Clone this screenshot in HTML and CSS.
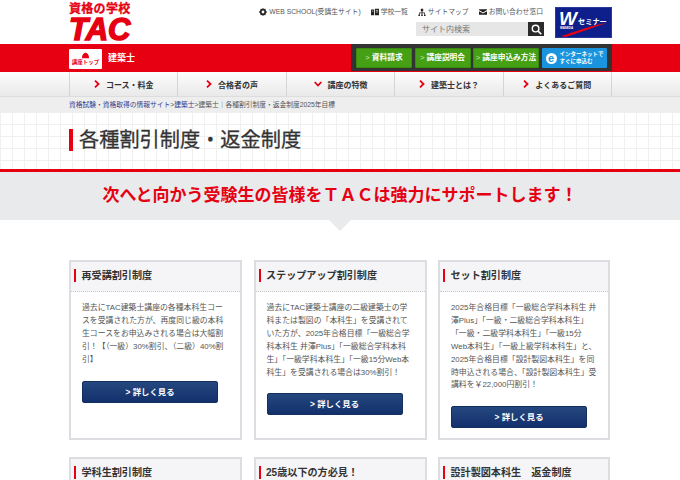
FILE: index.html
```html
<!DOCTYPE html>
<html lang="ja">
<head>
  <meta charset="utf-8">
  <title>各種割引制度・返金制度</title>
  <link rel="stylesheet" href="styles.css">
</head>
<body>

<header class="head wrap">
  <a class="logo">
    <span class="logo-sub">資格の学校</span>
    <span class="logo-tac">TAC</span>
  </a>
  <div class="head-mid">
    <ul class="head-links">
      <li>
        <svg class="ico" viewBox="0 0 10 10"><path d="M5 0l1.200 1.300 1.800-.3.3 1.800L10 5 8.300 7.200 8 9l-1.800-.3L5 10 3.800 8.700 2 9l-.3-1.800L0 5l1.700-2.200L2 1l1.800.3z" fill="#222"/><circle cx="5" cy="5" r="1.800" fill="#fff"/></svg>
        WEB SCHOOL(受講生サイト)
      </li>
      <li>
        <svg class="ico" viewBox="0 0 10 10"><path d="M0 2h4v7H0zM5 1h5v8H5z" fill="#222"/><path d="M1 4h2M6 3h3M6 5h3" stroke="#fff" stroke-width=".8"/></svg>
        学校一覧
      </li>
      <li>
        <svg class="ico" viewBox="0 0 10 10"><path d="M3.500 1h3v3h-3zM4.500 4h1v1.500h3V8h-1V6.500h-2V8h-1V6.500h-2V8h-1V5.500h3z" fill="#222"/><path d="M.5 8h2v2h-2zM4 8h2v2H4zM7.500 8h2v2h-2z" fill="#222"/></svg>
        サイトマップ
      </li>
      <li>
        <svg class="ico" viewBox="0 0 10 10"><path d="M0 1.500h10v1L5 5.500 0 2.500zM0 4l5 3 5-3v4.500H0z" fill="#222"/></svg>
        お問い合わせ窓口
      </li>
    </ul>
    <form class="search">
      <input class="search-box" type="text" placeholder="サイト内検索">
      <button class="search-btn" type="button">
        <svg viewBox="0 0 12 12" width="11" height="11"><circle cx="5" cy="5" r="3.600" fill="none" stroke="#fff" stroke-width="1.600"/><path d="M7.800 7.800l3.400 3.400" stroke="#fff" stroke-width="1.800"/></svg>
      </button>
    </form>
  </div>
  <a class="wseminar">
    <svg class="w-swoosh" viewBox="0 0 57 31"><path d="M6 29C20 25 36 18 52 16 38 20 22 27 10 30z" fill="#e60012"/></svg>
    <span class="w-letter">W</span>
    <span class="w-text">セミナー</span>
    <span class="w-small">WASEDA</span>
  </a>
</header>

<div class="redbar">
  <div class="wrap redbar-in">
    <div class="course">
      <a class="course-top">
        <svg viewBox="0 0 10 8" width="9" height="7"><path d="M3.500 1.500C3.500.5 6.500.5 6.500 1.500 8 2.500 9 4 9 7H1c0-3 1-4.500 2.500-5.500z" fill="#e60012"/></svg>
        <span>講座トップ</span>
      </a>
      <b class="course-name">建築士</b>
    </div>
    <div class="cta">
      <a class="cta-btn cta-w1"><i>&gt;</i>資料請求</a>
      <a class="cta-btn cta-w1"><i>&gt;</i>講座説明会</a>
      <a class="cta-btn cta-w2"><i>&gt;</i>講座申込み方法</a>
      <a class="cta-net">
        <span class="cta-e">e</span>
        <span class="cta-net-txt">インターネットで<br>すぐに申込む</span>
      </a>
    </div>
  </div>
</div>

<nav class="gnav">
  <ul class="wrap gnav-in">
    <li><svg class="chev" viewBox="0 0 6 8"><path d="M1 .7L4.500 4 1 7.300" /></svg>コース・料金</li>
    <li><svg class="chev" viewBox="0 0 6 8"><path d="M1 .7L4.500 4 1 7.300" /></svg>合格者の声</li>
    <li><svg class="chev chev-down" viewBox="0 0 8 6"><path d="M.7 1L4 4.500 7.300 1" /></svg>講座の特徴</li>
    <li><svg class="chev" viewBox="0 0 6 8"><path d="M1 .7L4.500 4 1 7.300" /></svg>建築士とは？</li>
    <li><svg class="chev" viewBox="0 0 6 8"><path d="M1 .7L4.500 4 1 7.300" /></svg>よくあるご質問</li>
  </ul>
</nav>

<div class="crumb">
  <p class="wrap"><a>資格試験・資格取得の情報サイト</a>&gt;<a>建築士</a>&gt;建築士｜各種割引制度・返金制度2025年目標</p>
</div>

<div class="title-area">
  <h1 class="wrap"><span class="title-text">各種割引制度・返金制度</span></h1>
</div>

<div class="lead">
  <p>次へと向かう受験生の皆様をＴＡＣは強力にサポートします！</p>
</div>

<main class="wrap cards">
  <section class="card">
    <h2><span>再受講割引制度</span></h2>
    <div class="card-body">
      <p>過去にTAC建築士講座の各種本科生コースを受講された方が、再度同じ級の本科生コースをお申込みされる場合は大幅割引！【（一級）30%割引、（二級）40%割引】</p>
      <a class="more">&gt; 詳しく見る</a>
    </div>
  </section>
  <section class="card">
    <h2><span>ステップアップ割引制度</span></h2>
    <div class="card-body">
      <p>過去にTAC建築士講座の二級建築士の学科または製図の「本科生」を受講されていた方が、2025年合格目標「一級総合学科本科生 井澤Plus」「一級総合学科本科生」「一級学科本科生」「一級15分Web本科生」を受講される場合は30%割引！</p>
      <a class="more">&gt; 詳しく見る</a>
    </div>
  </section>
  <section class="card">
    <h2><span>セット割引制度</span></h2>
    <div class="card-body">
      <p>2025年合格目標「一級総合学科本科生 井澤Plus」「一級・二級総合学科本科生」「一級・二級学科本科生」「一級15分<br>Web本科生」「一級上級学科本科生」と、<br>2025年合格目標「設計製図本科生」を同時申込される場合、「設計製図本科生」受講料を￥22,000円割引！</p>
      <a class="more">&gt; 詳しく見る</a>
    </div>
  </section>
  <section class="card">
    <h2><span>学科生割引制度</span></h2>
  </section>
  <section class="card">
    <h2><span>25歳以下の方必見！</span></h2>
  </section>
  <section class="card">
    <h2><span>設計製図本科生　返金制度</span></h2>
  </section>
</main>

</body>
</html>
```

FILE: styles.css
```css
* { box-sizing: border-box; }
html, body { height: 480px; overflow: hidden; }
body { margin: 0; background: #fff; color: #333; font-family: "Liberation Sans", "Noto Sans CJK JP", sans-serif; }
ul { list-style: none; margin: 0; padding: 0; }
.wrap { width: 543px; margin-left: 69px; }

/* header */
.head { display: flex; height: 44px; }
.logo { width: 150px; color: #e60012; display: block; padding-top: 3px; }
.logo-sub { display: block; font-size: 12px; line-height: 13px; font-weight: bold; letter-spacing: .3px; -webkit-text-stroke: .3px #e60012; }
.logo-tac { display: block; margin-top: 1px; font-size: 31px; line-height: 25px; font-weight: bold; font-style: italic; -webkit-text-stroke: 1.500px #e60012; }
.head-mid { width: 336px; display: flex; flex-direction: column; align-items: flex-end; padding-right: 12px; }
.head-links { display: flex; gap: 10px; font-size: 6.800px; line-height: 10px; color: #555; padding-top: 7px; white-space: nowrap; }
.head-links li { display: flex; align-items: center; gap: 2px; }
.ico { width: 8px; height: 8px; }
.search { display: flex; margin-top: 5px; margin-right: -1px; }
.search-box { width: 112px; height: 14px; border: 0; padding: 0 6px; background: #e6e6e6; font-size: 8px; font-family: inherit; }
.search-box::placeholder { color: #777; }
.search-btn { width: 16px; height: 14px; border: 0; padding: 0; background: #2b2b2b; display: flex; align-items: center; justify-content: center; }
.wseminar { position: relative; display: block; width: 57px; height: 31px; margin-top: 7px; background: #0e1f8c; border: 1px solid #2a3a9a; color: #fff; overflow: hidden; }
.w-swoosh { position: absolute; left: -1px; top: -1px; width: 57px; height: 31px; }
.w-letter { position: absolute; left: 3px; top: 1px; font-size: 19px; line-height: 20px; font-weight: bold; font-style: italic; }
.w-text { position: absolute; left: 22px; top: 9px; font-size: 7.200px; line-height: 9px; font-weight: bold; }
.w-small { position: absolute; left: 4px; top: 18px; font-size: 3px; line-height: 4px; font-weight: bold; }

/* red bar */
.redbar { height: 28px; background: #e60012; }
.redbar-in { display: flex; justify-content: space-between; height: 27px; }
.course { display: flex; align-items: center; gap: 6px; }
.course-top { width: 33px; height: 20px; margin-top: 2px; background: #fff; color: #e60012; border-radius: 1px; display: flex; flex-direction: column; align-items: center; justify-content: center; font-size: 5.500px; line-height: 7px; font-weight: bold; white-space: nowrap; }
.course-name { color: #fff; font-size: 9px; }
.cta { width: 261px; background: #333; display: flex; gap: 2.500px; padding: 4px 5px 3px; }
.cta-btn { height: 20px; background: #45a013; border: 1px solid #3a8c10; color: #fff; font-size: 7.700px; line-height: 18px; font-weight: bold; text-align: center; white-space: nowrap; border-radius: 1px; }
.cta-btn i { font-style: normal; font-weight: normal; margin-right: 2px; color: #cfe8b5; }
.cta-w1 { width: 56px; }
.cta-w2 { width: 66px; }
.cta-net { width: 65px; height: 20px; background: #1b94e0; color: #fff; display: flex; align-items: center; gap: 3px; padding-left: 4px; border-radius: 1px; white-space: nowrap; }
.cta-e { width: 11px; height: 11px; border-radius: 50%; background: #fff; color: #1b94e0; font-size: 11px; line-height: 10px; font-weight: bold; text-align: center; }
.cta-net-txt { font-size: 5.500px; line-height: 7px; font-weight: bold; }

/* global nav */
.gnav { height: 25px; background: linear-gradient(#fdfdfd, #e9e9e9); border-bottom: 1px solid #ddd; }
.gnav-in { display: flex; height: 24px; border-right: 1px solid #d5d5d5; }
.gnav-in li { flex: 1; border-left: 1px solid #d5d5d5; display: flex; align-items: center; justify-content: center; gap: 6px; font-size: 8px; font-weight: bold; color: #333; white-space: nowrap; }
.chev { width: 6px; height: 8px; fill: none; stroke: #e60012; stroke-width: 1.800; }
.chev-down { width: 8px; height: 6px; }

.crumb { height: 15px; background: #eeeeee; }
.crumb p { margin-top: 0; margin-bottom: 0; font-size: 6.750px; line-height: 15px; color: #555; white-space: nowrap; }
.crumb a { color: #2f4190; }

/* title */
.title-area {
  height: 60px;
  border-bottom: 3px solid #e60012;
  background-color: #fff;
  background-image: linear-gradient(#f0f0f0 1px, transparent 1px), linear-gradient(90deg, #f0f0f0 1px, transparent 1px);
  background-size: 12px 12px;
}
.title-area h1 { margin-top: 0; margin-bottom: 0; padding-top: 17px; font-size: 20.200px; line-height: 22px; font-weight: normal; color: #333; -webkit-text-stroke: .3px #333; }
.title-text { display: block; border-left: 4.500px solid #e60012; padding-left: 6px; white-space: nowrap; }

.lead { position: relative; height: 48px; background: #e9eaec; }
.lead p { margin: 0; text-align: center; font-size: 17px; line-height: 48px; font-weight: bold; color: #e60012; white-space: nowrap; }
.lead::after { content: ""; position: absolute; left: 329px; top: 48px; border: 11px solid transparent; border-top-color: #e9eaec; border-bottom: 0; }

/* cards */
.cards { height: 220px; overflow: hidden; margin-top: 40px; display: grid; grid-template-columns: 173px 173px 172px; grid-auto-rows: min-content; column-gap: 11.500px; row-gap: 17px; }
.card { height: 180px; border: 2px solid #dcdde1; background: #fff; }
.card:nth-child(n+4) { height: 60px; }
.card h2 { margin: 0; height: 30px; padding: 7px 0 0 3px; background: #f5f5f8; border-bottom: 1px dotted #ccc; font-size: 10.100px; line-height: 13px; color: #333; white-space: nowrap; }
.card h2 span { display: block; border-left: 2.500px solid #e60012; padding-left: 5.500px; }
.card-body { padding: 10px 10px 0 11px; }
.card-body p { margin: 0 0 14px; font-size: 7.870px; line-height: 12.900px; color: #555; }
.more { display: block; width: 136px; height: 22px; background: linear-gradient(#25477f, #13306c); border: 1px solid #12305f; border-radius: 2px; color: #fff; font-size: 8.400px; line-height: 20px; font-weight: bold; text-align: center; }
```
